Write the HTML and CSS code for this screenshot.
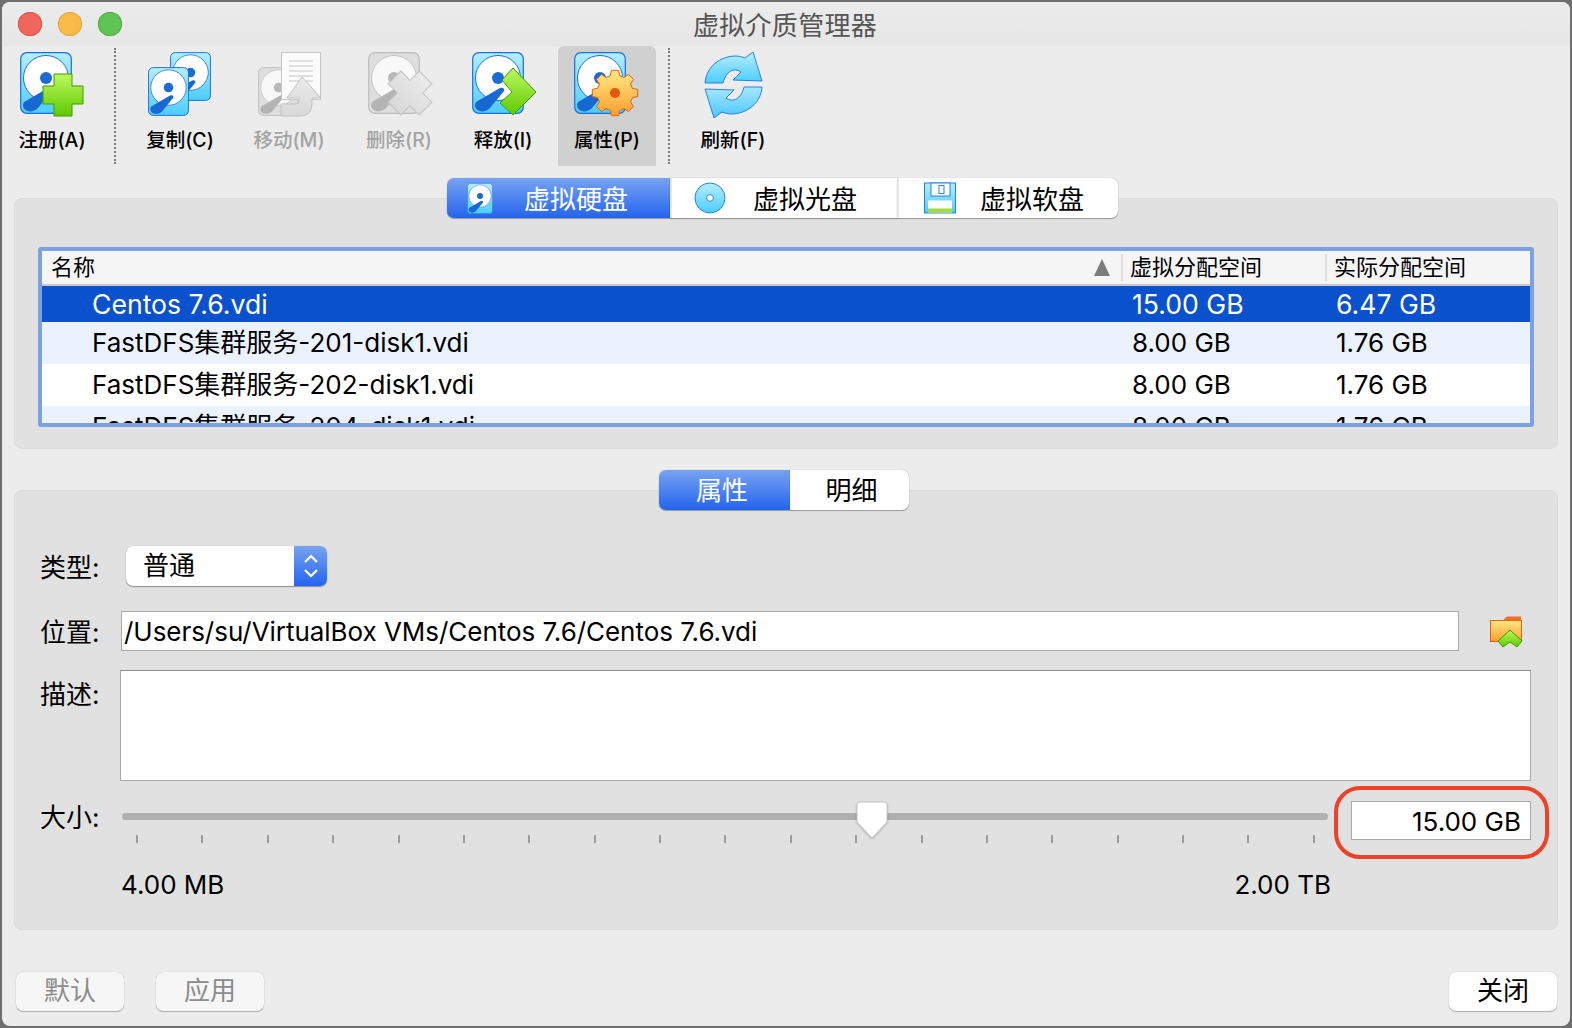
FILE: index.html
```html
<!DOCTYPE html>
<html lang="zh">
<head>
    <meta charset="UTF-8">
    <meta name="viewport" content="width=device-width, initial-scale=1.0">
    <title>虚拟介质管理器</title>
    <link rel="stylesheet" href="styles.css">
</head>
<body>
    <svg class="defs" width="0" height="0">
        <defs>
            <linearGradient id="skyFill" x1="0" y1="0" x2="0" y2="1">
                <stop offset="0" stop-color="#b4eeff"/>
                <stop offset="1" stop-color="#4ccdff"/>
            </linearGradient>
            <linearGradient id="skyFillFlip" x1="0" y1="1" x2="0" y2="0">
                <stop offset="0" stop-color="#a8e8ff"/>
                <stop offset="1" stop-color="#4cc6ff"/>
            </linearGradient>
            <linearGradient id="greenFill" x1="0" y1="0" x2="0" y2="1">
                <stop offset="0" stop-color="#bdf95f"/>
                <stop offset="1" stop-color="#5fc900"/>
            </linearGradient>
            <linearGradient id="greyFill" x1="0" y1="0" x2="0" y2="1">
                <stop offset="0" stop-color="#ebebeb"/>
                <stop offset="1" stop-color="#d8d8d8"/>
            </linearGradient>
            <linearGradient id="gearFill" x1="0" y1="0" x2="0" y2="1">
                <stop offset="0" stop-color="#ffe884"/>
                <stop offset="1" stop-color="#ff9f2e"/>
            </linearGradient>
            <symbol id="disk" viewBox="0 0 52 62">
                <rect x="0.7" y="0.7" width="50.6" height="60.6" rx="6" fill="url(#skyFill)" stroke="#1a6fd8" stroke-width="1.2"/>
                <circle cx="26" cy="26" r="22.5" fill="#fff" stroke="#1a6fd8" stroke-width="1"/>
                <circle cx="26" cy="26" r="6" fill="#1a6bd6"/>
                <path d="M4 50 L28 36 C31 35 33 37 32 39 L18 56 C15 59 11 60 8 59 C3 58 2 53 4 50z" fill="#1868d4"/>
            </symbol>
            <symbol id="diskGrey" viewBox="0 0 52 62">
                <rect x="0.7" y="0.7" width="50.6" height="60.6" rx="6" fill="#dedede" stroke="#bdbdbd" stroke-width="1.2"/>
                <circle cx="26" cy="26" r="22.5" fill="#f8f8f8" stroke="#c4c4c4" stroke-width="1"/>
                <circle cx="26" cy="26" r="6" fill="#b8b8b8"/>
                <path d="M4 50 L28 36 C31 35 33 37 32 39 L18 56 C15 59 11 60 8 59 C3 58 2 53 4 50z" fill="#b4b4b4"/>
            </symbol>
        </defs>
    </svg>

    <div class="window">
        <div class="titlebar">
            <div class="lights">
                <span class="light light-red"></span>
                <span class="light light-yellow"></span>
                <span class="light light-green"></span>
            </div>
            <div class="title">虚拟介质管理器</div>
        </div>

        <div class="toolbar">
            <div class="tool tool-first">
                <svg class="tool-icon" viewBox="0 0 70 66">
                    <use href="#disk" x="3" y="0" width="52" height="62"/>
                    <path d="M37 22H55V34H66V52H55V64H37V52H26V34H37z" fill="url(#greenFill)" stroke="#3f9a00"/>
                </svg>
                <span>注册(A)</span>
            </div>
            <div class="tool-sep"></div>
            <div class="tool">
                <svg class="tool-icon" viewBox="0 0 70 66">
                    <use href="#disk" x="25" y="0" width="41" height="49"/>
                    <use href="#disk" x="3" y="15" width="41" height="49"/>
                </svg>
                <span>复制(C)</span>
            </div>
            <div class="tool tool-off tool-move">
                <svg class="tool-icon" viewBox="0 0 70 66">
                    <use href="#diskGrey" x="4" y="15" width="41" height="49"/>
                    <rect x="27.5" y="0.5" width="39" height="47" fill="#fbfbfb" stroke="#c6c6c6"/>
                    <path d="M35 9H59M35 14H59M35 19H59M35 24H59M35 29H59" stroke="#c4c4c4" fill="none"/>
                    <path d="M48 25 L67 46 H58 V52 Q58 64 46 64 H27 V52 H41 Q45 52 45 49 V46 H33z" fill="url(#greyFill)" stroke="#c2c2c2"/>
                </svg>
                <span>移动(M)</span>
            </div>
            <div class="tool tool-off">
                <svg class="tool-icon" viewBox="0 0 70 66">
                    <use href="#diskGrey" x="4" y="0" width="52" height="62"/>
                    <path transform="translate(46 41) rotate(45)" d="M-9 -22H9V-9H22V9H9V22H-9V9H-22V-9H-9z" fill="url(#greyFill)" stroke="#c2c2c2"/>
                </svg>
                <span>删除(R)</span>
            </div>
            <div class="tool">
                <svg class="tool-icon" viewBox="0 0 70 66">
                    <use href="#disk" x="4" y="0" width="52" height="62"/>
                    <path d="M45 16 L68 40 L45 63 L32 51 L44 40 L34 28z" fill="url(#greenFill)" stroke="#3f9a00"/>
                </svg>
                <span>释放(I)</span>
            </div>
            <div class="tool tool-active">
                <svg class="tool-icon" viewBox="0 0 70 66">
                    <use href="#disk" x="2" y="0" width="52" height="62"/>
                    <g transform="translate(43 41)">
                        <polygon points="17.4,-4.7 22.7,-3.6 22.7,3.6 17.4,4.7 15.6,9 18.6,13.5 13.5,18.6 9,15.6 4.7,17.4 3.6,22.7 -3.6,22.7 -4.7,17.4 -9,15.6 -13.5,18.6 -18.6,13.5 -15.6,9 -17.4,4.7 -22.7,3.6 -22.7,-3.6 -17.4,-4.7 -15.6,-9 -18.6,-13.5 -13.5,-18.6 -9,-15.6 -4.7,-17.4 -3.6,-22.7 3.6,-22.7 4.7,-17.4 9,-15.6 13.5,-18.6 18.6,-13.5 15.6,-9" fill="url(#gearFill)" stroke="#e2620e"/>
                        <circle r="5" fill="#e2580c"/>
                    </g>
                </svg>
                <span>属性(P)</span>
            </div>
            <div class="tool-sep tool-sep-last"></div>
            <div class="tool">
                <svg class="tool-icon" viewBox="0 0 70 66">
                    <path d="M7 31 C8 15 22 4 38 4 C41 4 44 5 47 6 L55 0 L64 29 L35 28 L43 20 C36 15 28 19 25 31z" fill="url(#skyFill)" stroke="#2a80e0"/>
                    <path transform="rotate(180 35.5 33)" d="M7 31 C8 15 22 4 38 4 C41 4 44 5 47 6 L55 0 L64 29 L35 28 L43 20 C36 15 28 19 25 31z" fill="url(#skyFillFlip)" stroke="#2a80e0"/>
                </svg>
                <span>刷新(F)</span>
            </div>
        </div>

        <div class="content">
            <div class="segments segments-media">
                <div class="seg seg-on seg-media">
                    <svg class="seg-icon" viewBox="0 0 26 31"><use href="#disk" width="26" height="31"/></svg>
                    <span>虚拟硬盘</span>
                </div>
                <div class="seg seg-media seg-cd">
                    <svg class="seg-icon" viewBox="0 0 32 32">
                        <circle cx="16" cy="16" r="15" fill="url(#skyFill)" stroke="#2a80e0"/>
                        <circle cx="16" cy="16" r="3.4" fill="#fff" stroke="#2a80e0"/>
                    </svg>
                    <span>虚拟光盘</span>
                </div>
                <div class="seg seg-media seg-floppy">
                    <svg class="seg-icon" viewBox="0 0 32 31">
                        <rect x="0.5" y="0.5" width="31" height="30" fill="url(#skyFill)" stroke="#2a80e0"/>
                        <rect x="7" y="0.5" width="19" height="13" fill="#fff" stroke="#2a80e0"/>
                        <rect x="15" y="3" width="5" height="8" fill="#fff" stroke="#2a80e0"/>
                        <rect x="4" y="18" width="24" height="12" fill="#fff"/>
                        <rect x="4" y="26" width="24" height="4" fill="#a2dc3c"/>
                    </svg>
                    <span>虚拟软盘</span>
                </div>
            </div>
            <div class="panel panel-list">
                <div class="table">
                    <div class="row row-head">
                        <div class="cell-name">名称<span class="sort"></span></div>
                        <div class="cell-size">虚拟分配空间</div>
                        <div class="cell-size">实际分配空间</div>
                    </div>
                    <div class="row row-selected">
                        <div class="cell-name">Centos 7.6.vdi</div>
                        <div class="cell-size">15.00 GB</div>
                        <div class="cell-size">6.47 GB</div>
                    </div>
                    <div class="row row-alt">
                        <div class="cell-name">FastDFS集群服务-201-disk1.vdi</div>
                        <div class="cell-size">8.00 GB</div>
                        <div class="cell-size">1.76 GB</div>
                    </div>
                    <div class="row">
                        <div class="cell-name">FastDFS集群服务-202-disk1.vdi</div>
                        <div class="cell-size">8.00 GB</div>
                        <div class="cell-size">1.76 GB</div>
                    </div>
                    <div class="row row-alt">
                        <div class="cell-name">FastDFS集群服务-204-disk1.vdi</div>
                        <div class="cell-size">8.00 GB</div>
                        <div class="cell-size">1.76 GB</div>
                    </div>
                </div>
            </div>

            <div class="segments segments-detail">
                <div class="seg seg-on seg-attr">属性</div>
                <div class="seg seg-info">明细</div>
            </div>
            <div class="panel panel-form">
                <div class="form-row form-type">
                    <label>类型:</label>
                    <div class="select">
                        <span class="select-text">普通</span>
                        <span class="select-arrows">
                            <svg width="16" height="30" viewBox="0 0 16 30">
                                <path d="M2 11 L8 5 L14 11M2 19 L8 25 L14 19" fill="none" stroke="#fff" stroke-width="2.2"/>
                            </svg>
                        </span>
                    </div>
                </div>
                <div class="form-row form-location">
                    <label>位置:</label>
                    <div class="input input-path">/Users/su/VirtualBox VMs/Centos 7.6/Centos 7.6.vdi</div>
                    <svg class="folder" viewBox="0 0 33 33">
                        <path d="M14 3 L17 0.5 H31 V10 H14z" fill="#f0702a"/>
                        <rect x="0.5" y="4.5" width="31" height="21" fill="url(#gearFill)" stroke="#e2620e"/>
                        <path d="M20 14 L32 25 L27 31 L20 26 L13 31 L8 25z" fill="url(#greenFill)" stroke="#3f9a00"/>
                    </svg>
                </div>
                <div class="form-row form-desc">
                    <label>描述:</label>
                    <div class="input textarea"></div>
                </div>
                <div class="form-row form-size">
                    <label>大小:</label>
                    <div class="slider">
                        <div class="track"></div>
                        <div class="ticks">
                            <i></i><i></i><i></i><i></i><i></i><i></i><i></i><i></i><i></i><i></i>
                            <i></i><i></i><i></i><i></i><i></i><i></i><i></i><i></i><i></i>
                        </div>
                        <svg class="thumb" viewBox="0 0 34 40">
                            <path d="M5 2 H29 Q32 2 32 5 V22 L17 38 L2 22 V5 Q2 2 5 2z" fill="#fff" stroke="#c4c4c4"/>
                        </svg>
                    </div>
                    <div class="value-wrap">
                        <div class="input input-value">15.00 GB</div>
                    </div>
                </div>
                <div class="range">
                    <span>4.00 MB</span>
                    <span>2.00 TB</span>
                </div>
            </div>

            <div class="buttons">
                <button class="btn" disabled>默认</button>
                <button class="btn" disabled>应用</button>
                <button class="btn btn-close">关闭</button>
            </div>
        </div>
    </div>
</body>
</html>
```

FILE: styles.css
```css
:root {
    --win-bg: #ececec;
    --panel-bg: #e1e1e1;
    --blue-top: #78a3f2;
    --blue-bottom: #2464ee;
    --select-blue: #0a52cd;
    --row-alt: #ebf2fe;
    --field-line: #a9a9a9;
}

* {
    margin: 0;
    padding: 0;
    box-sizing: border-box;
    font-family: Inter, 'Noto Sans CJK SC', sans-serif;
}

html, body {
    width: 1572px;
    height: 1028px;
    overflow: hidden;
}

body {
    background-color: #6e6e6e;
    padding: 2px;
    color: #000;
}

.defs {
    position: absolute;
}

.window {
    width: 1568px;
    height: 1024px;
    background-color: var(--win-bg);
    border-radius: 8px;
    overflow: hidden;
}

/* title bar */
.titlebar {
    height: 44px;
    background: linear-gradient(#ebebeb, #e6e6e6);
    display: flex;
    align-items: center;
}

.lights {
    display: flex;
    gap: 16px;
    padding-left: 16px;
}

.light {
    width: 24px;
    height: 24px;
    border-radius: 50%;
}

.light-red { background: #f1665c; box-shadow: inset 0 0 0 1px #e0524a; }
.light-yellow { background: #f8bb47; box-shadow: inset 0 0 0 1px #e2a63a; }
.light-green { background: #5fc454; box-shadow: inset 0 0 0 1px #50ad46; }

.title {
    flex: 1;
    text-align: center;
    font-size: 26px;
    line-height: 40px;
    color: #555;
    padding: 4px 60px 0 0;
    margin-left: -62px;
    letter-spacing: 0.3px;
}

/* toolbar */
.toolbar {
    height: 120px;
    display: flex;
    align-items: stretch;
    gap: 6px;
}

.tool {
    width: 98px;
    flex: none;
    display: flex;
    flex-direction: column;
    align-items: center;
    padding-top: 6px;
    font-size: 19.5px;
    font-weight: 500;
    line-height: 32px;
    white-space: nowrap;
}

.tool-first {
    margin-left: 1px;
}

.tool-move {
    margin: 0 6px 0 5px;
}

.tool-icon {
    width: 70px;
    height: 66px;
    margin-bottom: 6px;
}

.tool-off {
    color: #a3a3a3;
}

.tool-active {
    background-color: #d0d0d0;
    border-radius: 6px 6px 0 0;
}

.tool-sep {
    width: 2px;
    flex: none;
    margin: 2px 9px 2px 7px;
    border-left: 2px dotted #7a7a7a;
}

.tool-sep-last {
    margin: 2px 8px 2px 6px;
}

/* segmented controls */
.content {
    padding: 12px 12px 0;
}

.segments {
    display: flex;
    justify-content: center;
    height: 40px;
    margin-bottom: -20px;
    padding-right: 5px;
    position: relative;
    z-index: 1;
}

.segments-media {
    padding-right: 7px;
}

.segments-detail {
    margin-top: 21px;
}

.seg {
    background: #fff;
    height: 40px;
    display: flex;
    align-items: center;
    font-size: 26px;
    line-height: 40px;
    box-shadow: 0 1px 1px rgba(0,0,0,0.3), 0 0 1px rgba(0,0,0,0.3);
}

.seg span {
    padding-top: 3px;
}

.seg-on {
    background: linear-gradient(var(--blue-top), var(--blue-bottom));
    color: #fff;
}

.seg-media {
    width: 227px;
    padding-left: 22px;
    border-left: 2px solid #e6e6e6;
}

.seg-media.seg-on {
    width: 223px;
    padding-left: 20px;
    border-left: none;
    border-radius: 7px 0 0 7px;
}

.seg-floppy {
    width: 221px;
    padding-left: 25px;
    border-radius: 0 7px 7px 0;
}

.seg-icon {
    width: 26px;
    height: 31px;
    flex: none;
    margin-right: 31px;
}

.seg-cd .seg-icon,
.seg-floppy .seg-icon {
    width: 32px;
    height: 32px;
    margin-right: 27px;
}

.seg-floppy .seg-icon {
    margin-right: 24px;
}

.seg-attr,
.seg-info {
    justify-content: center;
    padding-top: 2px;
}

.seg-attr {
    width: 131px;
    padding-right: 4px;
    border-radius: 7px 0 0 7px;
}

.seg-info {
    width: 119px;
    padding-left: 5px;
    border-radius: 0 7px 7px 0;
}

/* panels */
.panel {
    background-color: var(--panel-bg);
    border: 1px solid #dadada;
    border-radius: 8px;
}

.panel-list {
    height: 251px;
    padding: 48px 23px 0;
}

.table {
    height: 180px;
    border: 4px solid #7ba1e3;
    border-radius: 3px;
    background: #fff;
    overflow: hidden;
}

.row {
    display: grid;
    grid-template-columns: 1079px 204px 1fr;
    height: 42px;
    font-size: 26px;
    line-height: 38px;
    align-items: center;
}

.row-head {
    height: 35px;
    background-color: #f5f5f5;
    border-bottom: 2px solid #c9c9c9;
    font-size: 22px;
    line-height: 31px;
}

.row-selected {
    height: 36px;
    background-color: var(--select-blue);
    color: #fff;
    font-size: 26.6px;
    line-height: 36px;
}

.row-alt {
    background-color: var(--row-alt);
}

.cell-name {
    padding-left: 50px;
    white-space: nowrap;
    position: relative;
}

.cell-size {
    padding-left: 11px;
    white-space: nowrap;
}

.row-head .cell-name {
    padding-left: 9px;
}

.row-head .cell-size {
    border-left: 2px solid #dedede;
    height: 27px;
    line-height: 27px;
    padding-left: 7px;
}

.sort {
    position: absolute;
    right: 11px;
    top: 7px;
    width: 0;
    height: 0;
    border-left: 8.5px solid transparent;
    border-right: 8.5px solid transparent;
    border-bottom: 17px solid #7c7c7c;
}

/* form */
.panel-form {
    height: 440px;
    padding: 55px 26px 0 25px;
    font-size: 26px;
}

.form-row {
    display: flex;
    align-items: flex-start;
}

.form-row label {
    width: 80px;
    flex: none;
    line-height: 44px;
}

.form-type {
    height: 40px;
}

.select {
    width: 201px;
    height: 40px;
    margin-left: 6px;
    background: #fff;
    border-radius: 7px;
    display: flex;
    justify-content: space-between;
    box-shadow: 0 1px 1px rgba(0,0,0,0.35), 0 0 1px rgba(0,0,0,0.3);
    overflow: hidden;
}

.select-text {
    line-height: 40px;
    padding-left: 17px;
}

.select-arrows {
    width: 33px;
    background: linear-gradient(var(--blue-top), var(--blue-bottom));
    display: flex;
    align-items: center;
    justify-content: center;
}

.input {
    background: #fff;
    border: 1px solid var(--field-line);
}

.form-location {
    height: 40px;
    margin-top: 25px;
}

.input-path {
    width: 1338px;
    height: 40px;
    margin-left: 1px;
    padding-left: 2px;
    line-height: 39px;
    letter-spacing: -0.04px;
    white-space: nowrap;
}

.folder {
    width: 33px;
    height: 33px;
    margin: 5px 0 0 31px;
}

.form-desc {
    margin-top: 19px;
}

.form-desc label {
    line-height: 50px;
}

.textarea {
    width: 1411px;
    height: 111px;
    border-top-color: #8e8e8e;
}

.form-size {
    margin-top: 20px;
    height: 39px;
}

.form-size label {
    line-height: 34px;
}

.slider {
    position: relative;
    width: 1206px;
    margin-left: 2px;
    padding-top: 12px;
}

.track {
    height: 7px;
    background: #b0b0b0;
    border-radius: 4px;
}

.ticks {
    display: flex;
    justify-content: space-between;
    margin-top: 15px;
    padding: 0 13px 0 14px;
}

.ticks i {
    display: block;
    width: 2px;
    height: 8px;
    background: #9c9c9c;
}

.thumb {
    position: absolute;
    left: 733px;
    top: -1px;
    width: 34px;
    height: 40px;
    filter: drop-shadow(0 1px 1px rgba(0,0,0,0.2));
}

.value-wrap {
    position: relative;
    margin-left: 23px;
}

/* red mark drawn over the screenshot */
.value-wrap::after {
    content: "";
    box-sizing: border-box;
    position: absolute;
    left: -17px;
    top: -15px;
    width: 215px;
    height: 73px;
    border: 4.5px solid #ee4128;
    border-radius: 26px;
}

.input-value {
    width: 180px;
    height: 39px;
    text-align: right;
    padding-right: 9px;
    line-height: 40px;
}

.range {
    display: flex;
    justify-content: space-between;
    width: 1210px;
    margin: 25px 0 0 81px;
    line-height: 40px;
}

/* bottom buttons */
.buttons {
    display: flex;
    gap: 32px;
    margin-top: 42px;
    padding-left: 2px;
}

.btn {
    width: 108px;
    height: 39px;
    background: #f6f6f6;
    color: #8c8c8c;
    font-size: 26px;
    line-height: 36px;
    padding-bottom: 2px;
    border: none;
    border-radius: 7px;
    box-shadow: 0 1px 1px rgba(0,0,0,0.25), 0 0 1px rgba(0,0,0,0.25);
}

.btn-close {
    background: #fff;
    color: #000;
    margin-left: auto;
    margin-right: 1px;
}
```
